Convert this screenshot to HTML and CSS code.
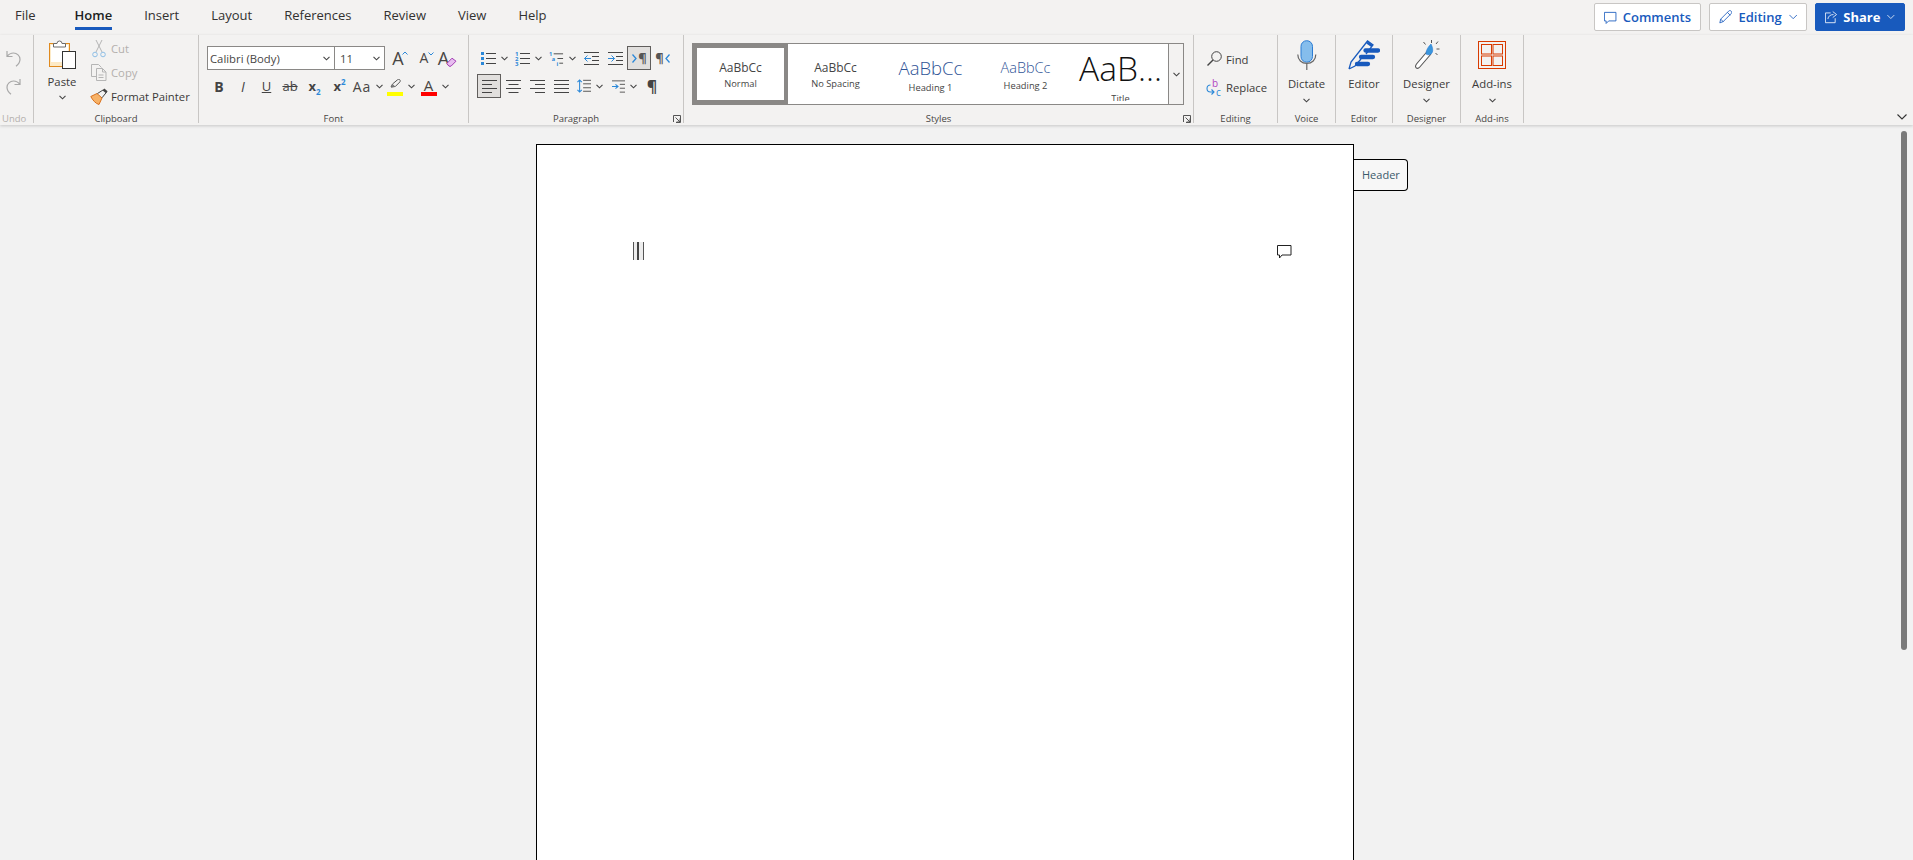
FILE: index.html
```html
<!DOCTYPE html>
<html lang="en">
<head>
<meta charset="utf-8">
<title>Word</title>
<link rel="stylesheet" href="styles.css">
</head>
<body>
<header class="topbar">
  <nav class="tabs">
    <a class="tab tab-file">File</a>
    <a class="tab tab-active">Home</a>
    <a class="tab">Insert</a>
    <a class="tab">Layout</a>
    <a class="tab">References</a>
    <a class="tab">Review</a>
    <a class="tab">View</a>
    <a class="tab">Help</a>
  </nav>
  <div class="actions">
    <button class="act act-comments">
      <svg width="15" height="15" viewBox="0 0 15 15" fill="none" stroke="#185abd"><path d="M.5 1.500h13.500v10H5.500l-3 3v-3h-2z"/></svg>
      <span>Comments</span>
    </button>
    <button class="act act-editing">
      <svg width="16" height="16" viewBox="0 0 16 16" fill="none" stroke="#185abd"><path d="M1 15l1-4.500L11.500 1c1-1 2.200-.8 3 0s1 2 0 3L5 13.500zM2 10.500l3.500 3.500M10 2.500l3.500 3.500"/></svg>
      <span>Editing</span>
      <svg class="chev-lg" width="10" height="6" viewBox="0 0 10 6" fill="none" stroke="#185abd"><path d="M.5.500l4.500 4.500 4.500-4.500"/></svg>
    </button>
    <button class="act act-share">
      <svg width="16" height="16" viewBox="0 0 15 15" fill="none" stroke="#fff"><path d="M7 2.500H.5v12h12V9"/><path d="M3.500 10c.5-3.500 3-5.500 7-5.500M9.500.8l4.700 3.700-4.700 3.700"/></svg>
      <span>Share</span>
      <svg class="chev-lg" width="10" height="6" viewBox="0 0 10 6" fill="none" stroke="#fff"><path d="M.5.500l4.500 4.500 4.500-4.500"/></svg>
    </button>
  </div>
</header>

<section class="ribbon">
  <div class="group g-undo">
    <div class="g-body undo-col">
      <svg width="15" height="17" viewBox="0 0 15 17" fill="none" stroke="#a8a8a8" stroke-width="1.200"><path d="M1 1v5.500h5.500M1.200 6.300C3 3.800 5 3 7.500 3 11 3 14 5.800 14 9.300c0 2.700-1.500 5-4 7"/></svg>
      <svg width="15" height="17" viewBox="0 0 15 17" fill="none" stroke="#a8a8a8" stroke-width="1.200"><path d="M14 1v5.500H8.500M13.800 6.300C12 3.800 10 3 7.500 3 4 3 1 5.800 1 9.300c0 2.700 1.500 5 4 7"/></svg>
    </div>
    <div class="g-label g-label-off">Undo</div>
  </div>

  <div class="group g-clip">
    <div class="g-body clip-body">
      <div class="paste">
        <svg width="28" height="30" viewBox="0 0 28 30">
          <rect x="1.500" y="4.500" width="20" height="23" fill="#fdeac6" stroke="#e08a1e"/>
          <rect x="3" y="6" width="17" height="17" fill="#fff"/>
          <path d="M5.500 8V4.500H9a2.500 2.500 0 0 1 5 0h3.500V8z" fill="#fff" stroke="#6b6b6b"/>
          <rect x="14.500" y="12.500" width="13" height="17" fill="#fff" stroke="#333"/>
        </svg>
        <span class="big-text">Paste</span>
        <svg class="chev paste-chev" width="7" height="5" viewBox="0 0 7 5"><path d="M.5.800l3 3 3-3"/></svg>
      </div>
      <div class="clip-col">
        <div class="clip-row off">
          <svg width="21" height="19" viewBox="0 0 21 19" fill="none"><path d="M6 1l6 12M12 1L6 13" stroke="#b5b5b5"/><circle cx="5" cy="15.500" r="2.300" stroke="#8fbfe6"/><circle cx="13" cy="15.500" r="2.300" stroke="#8fbfe6"/></svg>
          <span>Cut</span>
        </div>
        <div class="clip-row off">
          <svg width="21" height="17" viewBox="0 0 21 17" fill="none" stroke="#b5b5b5"><path d="M7 12.500H1.500V.5h7l3 3"/><path d="M6.500 4.500h6l3.500 3.500v8.500H6.500zM12.500 4.500v3.500H16M8.500 11h5M8.500 13.500h5"/></svg>
          <span>Copy</span>
        </div>
        <div class="clip-row">
          <svg width="21" height="17" viewBox="0 0 21 17" fill="none"><path d="M.8 8.500l6.200-3 5 4.500-3 6.500c-3.300-.8-6.500-4.500-8.200-8z" fill="#f7b267" stroke="#d9701c"/><path d="M7.500 5.500l6-3.800M12 9.800l4.500-5.600" stroke="#444"/><path d="M13.500 1.500l3.300 2.800" stroke="#444" stroke-width="2.500"/></svg>
          <span>Format Painter</span>
        </div>
      </div>
    </div>
    <div class="g-label">Clipboard</div>
  </div>

  <div class="group g-font">
    <div class="g-body rows">
      <div class="row">
        <div class="selects">
          <div class="sel sel-name"><span>Calibri (Body)</span><svg class="chev" width="7" height="5" viewBox="0 0 7 5"><path d="M.5.800l3 3 3-3"/></svg></div>
          <div class="sel sel-size"><span>11</span><svg class="chev" width="7" height="5" viewBox="0 0 7 5"><path d="M.5.800l3 3 3-3"/></svg></div>
        </div>
        <div class="tool t-grow"><span class="font-a">A</span><svg class="caret" width="6" height="4" viewBox="0 0 6 4" fill="none" stroke="#2b88d8"><path d="M.5 3.500L3 1l2.500 2.500"/></svg></div>
        <div class="tool t-shrink"><span class="font-a small">A</span><svg class="caret" width="6" height="4" viewBox="0 0 6 4" fill="none" stroke="#2b88d8"><path d="M.5.500L3 3l2.500-2.500"/></svg></div>
        <div class="tool t-clear"><span class="font-a">A</span><svg class="eraser" width="11" height="10" viewBox="0 0 11 10" fill="none"><path d="M.8 6.500L6 1.200l4 3-5 5H3z" fill="#e7bdf0" stroke="#a23cb4"/></svg></div>
      </div>
      <div class="row">
        <div class="tool w24 glyph glyph-b">B</div>
        <div class="tool w24 glyph glyph-i">I</div>
        <div class="tool w23 glyph glyph-u">U</div>
        <div class="tool w24 glyph glyph-s">ab</div>
        <div class="tool w25 glyph glyph-x">x<span class="sub">2</span></div>
        <div class="tool w25 glyph glyph-x">x<span class="sup">2</span></div>
        <div class="tool w32 split"><span class="aa">Aa</span><svg class="chev" width="7" height="5" viewBox="0 0 7 5"><path d="M.5.800l3 3 3-3"/></svg></div>
        <div class="tool w34 split">
          <span class="colored">
            <svg width="16" height="11" viewBox="0 0 16 11"><path d="M4 8l1.500-3L10.500.8c.8-.6 1.700-.6 2.300 0s.6 1.500 0 2.200L8.300 7.500z" fill="none" stroke="#555"/><path d="M4 8.500l1.800-3.300 2.700 2.500z" fill="#777"/></svg>
            <i class="bar bar-yellow"></i>
          </span>
          <svg class="chev" width="7" height="5" viewBox="0 0 7 5"><path d="M.5.800l3 3 3-3"/></svg>
        </div>
        <div class="tool w33 split">
          <span class="colored"><span class="color-a">A</span><i class="bar bar-red"></i></span>
          <svg class="chev" width="7" height="5" viewBox="0 0 7 5"><path d="M.5.800l3 3 3-3"/></svg>
        </div>
      </div>
    </div>
    <div class="g-label">Font</div>
  </div>

  <div class="group g-para">
    <div class="g-body rows">
      <div class="row">
        <div class="tool w34 split sp">
          <svg width="15" height="15" viewBox="0 0 15 15"><path d="M5 2.500h10M5 7.500h10M5 12.500h10" stroke="#444" fill="none"/><path d="M0 1h3v3H0zM0 6h3v3H0zM0 11h3v3H0z" fill="#2b88d8"/></svg>
          <svg class="chev" width="7" height="5" viewBox="0 0 7 5"><path d="M.5.800l3 3 3-3"/></svg>
        </div>
        <div class="tool w34 split sp">
          <svg width="15" height="19" viewBox="0 -2 15 19"><path d="M5 2.500h10M5 7.500h10M5 12.500h10" stroke="#444" fill="none"/><text class="mini" x="0" y="5">1</text><text class="mini" x="0" y="10">2</text><text class="mini" x="0" y="15">3</text></svg>
          <svg class="chev" width="7" height="5" viewBox="0 0 7 5"><path d="M.5.800l3 3 3-3"/></svg>
        </div>
        <div class="tool w34 split sp">
          <svg width="16" height="19" viewBox="0 -2 16 19"><path d="M5 2.500h10M9 7.500h6M11 12.500h4" stroke="#444" fill="none"/><text class="mini" x="0" y="5">1</text><text class="mini" x="3" y="10">a</text><text class="mini" x="8" y="15">i</text></svg>
          <svg class="chev" width="7" height="5" viewBox="0 0 7 5"><path d="M.5.800l3 3 3-3"/></svg>
        </div>
        <div class="tool w24">
          <svg width="15" height="13" viewBox="0 0 15 13" fill="none"><path d="M0 .5h15M8 4.500h7M8 8.500h7M0 12.500h15" stroke="#444"/><path d="M7 6.500H.5M3.500 3.500l-3 3 3 3" stroke="#2b88d8"/></svg>
        </div>
        <div class="tool w24">
          <svg width="15" height="13" viewBox="0 0 15 13" fill="none"><path d="M0 .5h15M8 4.500h7M8 8.500h7M0 12.500h15" stroke="#444"/><path d="M0 6.500h6.500M3.500 3.500l3 3-3 3" stroke="#2b88d8"/></svg>
        </div>
        <div class="tool w24 active">
          <svg class="dir-mark" width="5" height="9" viewBox="0 0 5 9" fill="none" stroke="#2b88d8" stroke-width="1.300"><path d="M.5.500l3.500 4-3.500 4"/></svg>
          <span class="pilcrow-sm">¶</span>
        </div>
        <div class="tool w24">
          <span class="pilcrow-sm">¶</span>
          <svg class="dir-mark" width="5" height="9" viewBox="0 0 5 9" fill="none" stroke="#2b88d8" stroke-width="1.300"><path d="M4.500.500L1 4.500l3.500 4"/></svg>
        </div>
      </div>
      <div class="row">
        <div class="tool w24 active">
          <svg width="15" height="13" viewBox="0 0 15 13" fill="none" stroke="#444"><path d="M0 .5h15M0 4.500h10M0 8.500h15M0 12.500h10"/></svg>
        </div>
        <div class="tool w24">
          <svg width="15" height="13" viewBox="0 0 15 13" fill="none" stroke="#444"><path d="M0 .5h15M2.500 4.500h10M0 8.500h15M2.500 12.500h10"/></svg>
        </div>
        <div class="tool w24">
          <svg width="15" height="13" viewBox="0 0 15 13" fill="none" stroke="#444"><path d="M0 .5h15M5 4.500h10M0 8.500h15M5 12.500h10"/></svg>
        </div>
        <div class="tool w24">
          <svg width="15" height="13" viewBox="0 0 15 13" fill="none" stroke="#444"><path d="M0 .5h15M0 4.500h15M0 8.500h15M0 12.500h15"/></svg>
        </div>
        <div class="tool w33 split sp">
          <svg width="16" height="16" viewBox="0 0 16 16" fill="none"><path d="M7 1.500h9M7 5.500h9M7 10h9M7 14h9" stroke="#444"/><path d="M3 1v14M.5 3.500L3 1l2.500 2.500M.5 12.500L3 15l2.500-2.500" stroke="#2b88d8" stroke-width="1.200"/></svg>
          <svg class="chev" width="7" height="5" viewBox="0 0 7 5"><path d="M.5.800l3 3 3-3"/></svg>
        </div>
        <div class="tool w34 split sp sp-wide">
          <svg width="15" height="15" viewBox="0 0 15 15" fill="none"><path d="M0 1h15M9 5h6M9 9.500h6M9 14h6" stroke="#444"/><path d="M0 7.500h6.500M4 5l3 2.500L4 10" stroke="#2b88d8" stroke-width="1.200"/></svg>
          <svg class="chev" width="7" height="5" viewBox="0 0 7 5"><path d="M.5.800l3 3 3-3"/></svg>
        </div>
        <div class="tool w24 pilcrow">¶</div>
      </div>
    </div>
    <div class="g-label">Paragraph</div>
    <svg class="launcher" width="8" height="8" viewBox="0 0 8 8" fill="none" stroke="#555"><path d="M.5 7V.5H7.500V7.500H3M2.500 2.500L7 7M7 3.500V7H3.500"/></svg>
  </div>

  <div class="group g-styles">
    <div class="g-body">
      <div class="gallery">
        <div class="style style-normal"><span class="sample">AaBbCc</span><span class="slabel">Normal</span></div>
        <div class="style style-nospace"><span class="sample">AaBbCc</span><span class="slabel">No Spacing</span></div>
        <div class="style style-h1"><span class="sample">AaBbCc</span><span class="slabel">Heading 1</span></div>
        <div class="style style-h2"><span class="sample">AaBbCc</span><span class="slabel">Heading 2</span></div>
        <div class="style style-title"><span class="sample">AaB...</span><span class="slabel">Title</span></div>
        <div class="more"><svg class="chev" width="7" height="5" viewBox="0 0 7 5"><path d="M.5.800l3 3 3-3"/></svg></div>
      </div>
    </div>
    <div class="g-label">Styles</div>
    <svg class="launcher" width="8" height="8" viewBox="0 0 8 8" fill="none" stroke="#555"><path d="M.5 7V.5H7.500V7.500H3M2.500 2.500L7 7M7 3.500V7H3.500"/></svg>
  </div>

  <div class="group g-edit">
    <div class="g-body edit-body">
      <div class="edit-row">
        <svg width="20" height="16" viewBox="0 0 20 16" fill="none" stroke="#444"><circle cx="10.500" cy="5.500" r="4.800"/><path d="M7 9L1.500 14.500" stroke-width="1.400"/></svg>
        <span>Find</span>
      </div>
      <div class="edit-row">
        <svg width="20" height="24" viewBox="0 -4 20 24" fill="none"><text class="rep-b" x="6" y="7.500">b</text><text class="rep-c" x="10" y="16.500">c</text><path d="M4.500 6C2.500 6 1 7.500 1 9.500s1.500 3.500 3.500 3.500H8M5.500 10.500L8 13l-2.500 2.500" stroke="#2b88d8" stroke-width="1.100"/></svg>
        <span>Replace</span>
      </div>
    </div>
    <div class="g-label">Editing</div>
  </div>

  <div class="group g-voice">
    <div class="g-body large">
      <svg width="20" height="30" viewBox="0 0 20 30" fill="none"><rect x="4" y=".7" width="11.500" height="21.500" rx="5.700" fill="#85bdec" stroke="#2b7cd3"/><path d="M.8 14.500c0 5.500 3.800 8.800 9 8.800s9-3.300 9-8.800M9.800 23.500V30" stroke="#666" stroke-width="1.200"/></svg>
      <span class="big-text">Dictate</span>
      <svg class="chev" width="7" height="5" viewBox="0 0 7 5"><path d="M.5.800l3 3 3-3"/></svg>
    </div>
    <div class="g-label">Voice</div>
  </div>

  <div class="group g-editor">
    <div class="g-body large">
      <svg width="32" height="30" viewBox="0 0 32 30" fill="none"><path d="M1 29l2-7L19.500 1l5.500 4-7 9M1 29l6-3 6-7" stroke="#185abd" stroke-width="1.300"/><path d="M19 2.500l5 3.500" stroke="#185abd" stroke-width="2.500"/><path d="M17.500 10.500h12.500M13 17h12M9 24h11" stroke="#185abd" stroke-width="4.300" stroke-linecap="round"/></svg>
      <span class="big-text">Editor</span>
    </div>
    <div class="g-label">Editor</div>
  </div>

  <div class="group g-designer">
    <div class="g-body large">
      <svg width="26" height="30" viewBox="0 0 26 30" fill="none"><path d="M14 10.500L2.500 24c-1.500 2-1 3.500-.2 4s2.200.5 3.500-1L17 14" fill="#fff" stroke="#555" stroke-width="1.100"/><path d="M12 14c0-4 2-7 5-10 1.500 3 2.500 6.500 1 9-1 1.700-4.500 2.500-6 1z" fill="#3a96dd" stroke="#2b7cd3" stroke-width=".6"/><path d="M9.500 2l2 2.500M17.500 0v3M24 1.500L22 4M25.500 9h-3M23.500 15l-2-2" stroke="#555"/></svg>
      <span class="big-text">Designer</span>
      <svg class="chev" width="7" height="5" viewBox="0 0 7 5"><path d="M.5.800l3 3 3-3"/></svg>
    </div>
    <div class="g-label">Designer</div>
  </div>

  <div class="group g-addins">
    <div class="g-body large">
      <svg width="28" height="28" viewBox="0 0 28 28" fill="none" stroke="#d83b01"><rect x=".5" y=".5" width="27" height="27"/><rect x="3.500" y="3.500" width="10" height="9.500"/><rect x="15" y="3.500" width="9.500" height="9.500"/><rect x="3.500" y="15" width="10" height="9.500"/><rect x="15" y="15" width="9.500" height="9.500"/></svg>
      <span class="big-text">Add-ins</span>
      <svg class="chev" width="7" height="5" viewBox="0 0 7 5"><path d="M.5.800l3 3 3-3"/></svg>
    </div>
    <div class="g-label">Add-ins</div>
  </div>

  <svg class="collapse" width="10" height="6" viewBox="0 0 10 6" fill="none" stroke="#333" stroke-width="1.100"><path d="M.5.500l4.500 4.500 4.500-4.500"/></svg>
</section>

<main class="workspace">
  <div class="doc-area">
    <article class="page">
      <div class="page-line">
        <div class="caret-mark"><i></i><i class="thick"></i><i></i></div>
        <svg class="comment-mark" width="15" height="15" viewBox="0 0 15 15" fill="#fff" stroke="#222"><path d="M.5.500h13.500v9.500H5L2.500 13v-3h-2z"/></svg>
      </div>
      <div class="header-tab">Header</div>
    </article>
  </div>
  <aside class="scroll"><div class="thumb"></div></aside>
</main>
</body>
</html>
```

FILE: styles.css
```css
* { box-sizing: border-box; }
html, body { margin: 0; height: 100%; }
body {
  width: 1913px;
  height: 860px;
  overflow: hidden;
  display: flex;
  flex-direction: column;
  background: #f2f2f2;
  color: #3b3a39;
  font-family: "Open Sans", "Noto Sans", sans-serif;
  font-size: 11.300px;
}
.topbar {
  height: 35px;
  flex: none;
  display: flex;
  justify-content: space-between;
  background: #f3f2f1;
}
.tabs { display: flex; padding-left: 15px; }
.tab {
  position: relative;
  margin-right: 32px;
  height: 30px;
  line-height: 30px;
  font-size: 13px;
  color: #323130;
  white-space: nowrap;
}
.tab-file { margin-right: 39px; }
.tab-active { font-weight: 600; color: #201f1e; border-bottom: 3px solid #185abd; line-height: 31px; }
.actions { display: flex; gap: 8px; padding: 3px 8px 0 0; }
.act {
  height: 28px;
  display: flex;
  align-items: center;
  gap: 6px;
  padding: 0 9px;
  border: 1px solid #c8c6c4;
  border-radius: 2px;
  background: #fff;
  color: #185abd;
  font: 600 13px "Open Sans", sans-serif;
}
.act-comments { width: 107px; }
.act-editing { width: 98px; }
.act-share { width: 90px; background: #185abd; border-color: #185abd; color: #fff; font-weight: 700; }
.chev-lg { margin-left: 1px; }

.ribbon {
  position: relative;
  height: 90px;
  flex: none;
  display: flex;
  align-items: flex-start;
  background: #f3f2f1;
  box-shadow: 0 1px 3px rgba(0,0,0,.18);
  z-index: 1;
}
.group {
  position: relative;
  height: 88px;
  flex: none;
  display: flex;
  flex-direction: column;
  border-right: 1px solid #c8c6c4;
}
.g-body { flex: 1; min-height: 0; }
.g-label {
  height: 16px;
  line-height: 23px;
  font-size: 9.500px;
  text-align: center;
  color: #484644;
  white-space: nowrap;
}
.g-label-off { color: #b3b0ad; text-align: left; padding-left: 2px; }
.g-undo { width: 34px; }
.g-clip { width: 165px; }
.g-font { width: 270px; }
.g-para { width: 215px; }
.g-styles { width: 510px; }
.g-edit { width: 84px; }
.g-voice { width: 58px; }
.g-editor { width: 57px; }
.g-designer { width: 68px; }
.g-addins { width: 63px; }

.chev { fill: none; stroke: #444; stroke-width: 1.100; flex: none; }
.big-text { line-height: 16px; font-size: 11.300px; color: #3b3a39; }

.undo-col { display: flex; flex-direction: column; gap: 11px; padding: 15px 0 0 6px; }
.clip-body { display: flex; }
.paste { width: 44px; margin-left: 6px; padding-top: 4px; display: flex; flex-direction: column; align-items: center; }
.paste .big-text { margin-top: 5px; }
.paste-chev { margin-top: 5px; }
.clip-col { margin-left: 6px; padding-top: 1px; }
.clip-row { height: 24px; display: flex; align-items: center; white-space: nowrap; color: #3b3a39; }
.clip-row.off { color: #b3b0ad; }

.rows { display: flex; flex-direction: column; gap: 4px; padding: 11px 0 0 8px; }
.row { display: flex; height: 24px; }
.tool { display: flex; align-items: center; justify-content: center; flex: none; height: 24px; }
.w23 { width: 23px; }
.w24 { width: 24px; }
.w25 { width: 25px; }
.w32 { width: 32px; }
.w33 { width: 33px; }
.w34 { width: 34px; }
.split { gap: 5px; }
.sp { justify-content: space-between; padding: 0 3px 0 4px; }
.sp-wide { padding-left: 6px; }
.active { background: #e1dfdd; border: 1px solid #605e5c; }

.selects { display: flex; height: 24px; width: 178px; border: 1px solid #8a8886; background: #fff; margin-right: 3px; }
.sel { display: flex; align-items: center; justify-content: space-between; color: #484644; font-size: 11.300px; padding-right: 4px; }
.sel-name { width: 127px; padding-left: 2px; border-right: 1px solid #8a8886; }
.sel-size { flex: 1; padding-left: 5px; }
.t-grow, .t-shrink, .t-clear { width: 24px; position: relative; }
.font-a { font-size: 18px; line-height: 24px; color: #484644; }
.font-a.small { font-size: 14px; }
.caret { position: absolute; top: 5px; right: 4px; }
.t-shrink .caret { right: 2px; top: 6px; }
.eraser { position: absolute; right: 3px; top: 11px; }
.t-clear .font-a { margin-right: 9px; }
.t-grow .font-a { margin-right: 4px; }
.glyph { font-size: 13px; color: #444; }
.glyph-b { font-weight: 700; font-size: 14px; }
.glyph-i { font-style: italic; font-size: 14px; }
.glyph-u { text-decoration: underline; }
.glyph-s { text-decoration: line-through; }
.glyph-x { font-weight: 700; font-size: 13px; }
.sub, .sup { font-size: 8px; color: #2b88d8; font-weight: 700; line-height: 1; }
.sub { margin-top: 11px; }
.sup { margin-top: -9px; }
.aa { font-size: 14px; letter-spacing: 1px; color: #484644; }
.colored { position: relative; width: 16px; height: 24px; display: flex; flex-direction: column; align-items: center; justify-content: flex-start; padding-top: 5px; }
.color-a { font-size: 15px; line-height: 12px; color: #484644; }
.bar { position: absolute; left: 0; top: 18px; width: 16px; height: 4px; }
.bar-yellow { background: #ffff00; }
.bar-red { background: #f00; }
.mini { font: 700 6px "Open Sans", sans-serif; fill: #2b88d8; }
.pilcrow-sm { font-size: 13px; color: #555; font-weight: 700; line-height: 1; }
.dir-mark { margin: 0 1px; }
.pilcrow { font-size: 16px; font-weight: 700; color: #444; }
.launcher { position: absolute; right: 2px; bottom: 0; }

.g-styles .g-body { padding: 8px 0 0 8px; }
.gallery { width: 492px; height: 62px; display: flex; border: 1px solid #8a8886; background: #fff; overflow: hidden; }
.style { width: 95px; flex: none; display: flex; flex-direction: column; align-items: center; font-family: "Open Sans", sans-serif; color: #3b3a39; }
.sample { white-space: nowrap; }
.slabel { font-size: 9.300px; line-height: 12px; font-family: "Open Sans", sans-serif; color: #444; white-space: nowrap; }
.style-normal { border: 4px solid #8a8886; padding-top: 10px; }
.style-nospace { padding-top: 14px; }
.style-normal .sample, .style-nospace .sample { font-size: 12px; line-height: 20px; font-weight: 400; color: #444; }
.style-h1 { padding-top: 12px; }
.style-h1 .sample { font-size: 18.500px; line-height: 24px; color: #2f5496; font-weight: 300; }
.style-h1 .slabel { margin-top: 2px; }
.style-h2 { padding-top: 14px; }
.style-h2 .sample { font-size: 14.500px; line-height: 20px; color: #2f5496; font-weight: 300; }
.style-h2 .slabel { margin-top: 2px; }
.style-title .sample { font-size: 33.500px; line-height: 49px; color: #111; font-weight: 300; }
.style-title .slabel { height: 8px; overflow: hidden; line-height: 12px; }
.more { flex: 1; display: flex; align-items: center; justify-content: center; border-left: 1px solid #8a8886; background: #f3f2f1; }

.edit-body { padding: 10px 0 0 12px; }
.edit-row { height: 28px; display: flex; align-items: center; color: #3b3a39; }
.rep-b { font: 10px "Open Sans", sans-serif; fill: #b146c2; }
.rep-c { font: 10px "Open Sans", sans-serif; fill: #2b88d8; }

.large { display: flex; flex-direction: column; align-items: center; padding-top: 5px; }
.large > svg:first-child { height: 30px; }
.large .big-text { margin-top: 6px; }
.large .chev { margin-top: 6px; }
.collapse { position: absolute; right: 6px; top: 79px; }

.workspace { flex: 1; min-height: 0; display: flex; }
.doc-area { flex: 1; display: flex; justify-content: center; padding-top: 19px; overflow: hidden; }
.page { position: relative; width: 818px; height: 1060px; flex: none; background: #fff; border: 1px solid #000; }
.page-line { display: flex; justify-content: space-between; align-items: flex-start; padding: 97px 61px 0 96px; }
.caret-mark { display: flex; gap: 3px; height: 18px; background: #ededed; }
.caret-mark i { width: 1px; background: #555; }
.caret-mark i.thick { width: 2px; background: #444; margin-right: 1px; }
.comment-mark { margin-top: 3px; }
.header-tab {
  position: absolute;
  left: 817px;
  top: 14px;
  width: 54px;
  height: 32px;
  line-height: 30px;
  padding-left: 8px;
  font-size: 11px;
  color: #3b5a6b;
  background: #f7f7f7;
  border: 1px solid #000;
  border-left: 0;
  border-radius: 0 4px 4px 0;
}
.scroll { width: 23px; flex: none; padding: 6px 6px 0 11px; }
.thumb { width: 6px; height: 519px; background: #7a7a7a; border-radius: 3px; }
```
